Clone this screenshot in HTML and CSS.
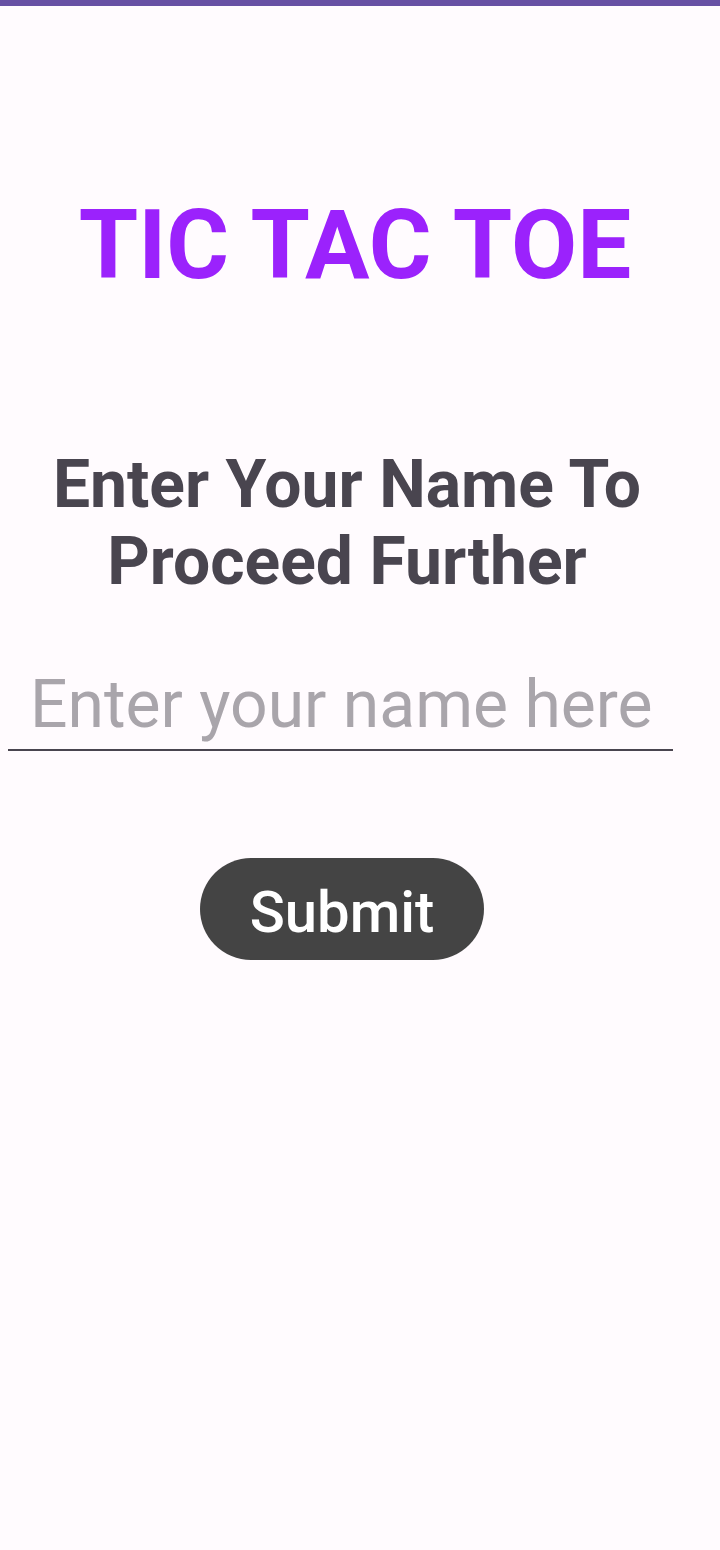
FILE: index.html
```html
<!DOCTYPE html>
<html lang="en">
<head>
<meta charset="utf-8">
<title>Tic Tac Toe</title>
<link rel="stylesheet" href="styles.css">
</head>
<body>
<div class="status-bar"></div>
<main class="screen">
  <h1 class="title">TIC TAC TOE</h1>
  <h2 class="prompt">Enter Your Name To<br>Proceed Further</h2>
  <div class="field">
    <input class="name-input" type="text" placeholder="Enter your name here">
  </div>
  <div class="actions">
    <button class="submit" type="button">Submit</button>
  </div>
</main>
</body>
</html>
```

FILE: styles.css
```css
* { box-sizing: border-box; }

html, body {
  margin: 0;
  padding: 0;
  background: #FFFBFE;
  font-family: Roboto, "Liberation Sans", sans-serif;
}

.status-bar {
  height: 6px;
  background: #6750A4;
}

.screen {
  display: flex;
  flex-direction: column;
  width: 720px;
}

.title {
  margin: 183px 0 0 0;
  padding-right: 10px;
  text-align: center;
  font-size: 96px;
  font-weight: 700;
  line-height: normal;
  color: #9B22FC;
}

.prompt {
  margin: 145px 0 0 0;
  padding-right: 26px;
  text-align: center;
  font-size: 66px;
  font-weight: 700;
  line-height: normal;
  color: #49454F;
}

.field {
  margin: 66px 0 0 8px;
  width: 665px;
  border-bottom: 2px solid #49454F;
}

.name-input {
  display: block;
  width: 100%;
  height: 83px;
  padding: 0 0 6px 22px;
  border: 0;
  outline: none;
  background: transparent;
  font-family: Roboto, "Liberation Sans", sans-serif;
  font-size: 66px;
  line-height: normal;
  color: #1C1B1F;
}

.name-input::placeholder {
  color: #A9A5AB;
}

.actions {
  display: flex;
  margin: 107px 0 0 200px;
}

.submit {
  width: 284px;
  height: 102px;
  border: 0;
  border-radius: 51px;
  background: #444444;
  color: #FFFFFF;
  font-family: Roboto, "Liberation Sans", sans-serif;
  font-size: 58px;
  font-weight: 500;
  padding: 6px 0 0 0;
}
```
